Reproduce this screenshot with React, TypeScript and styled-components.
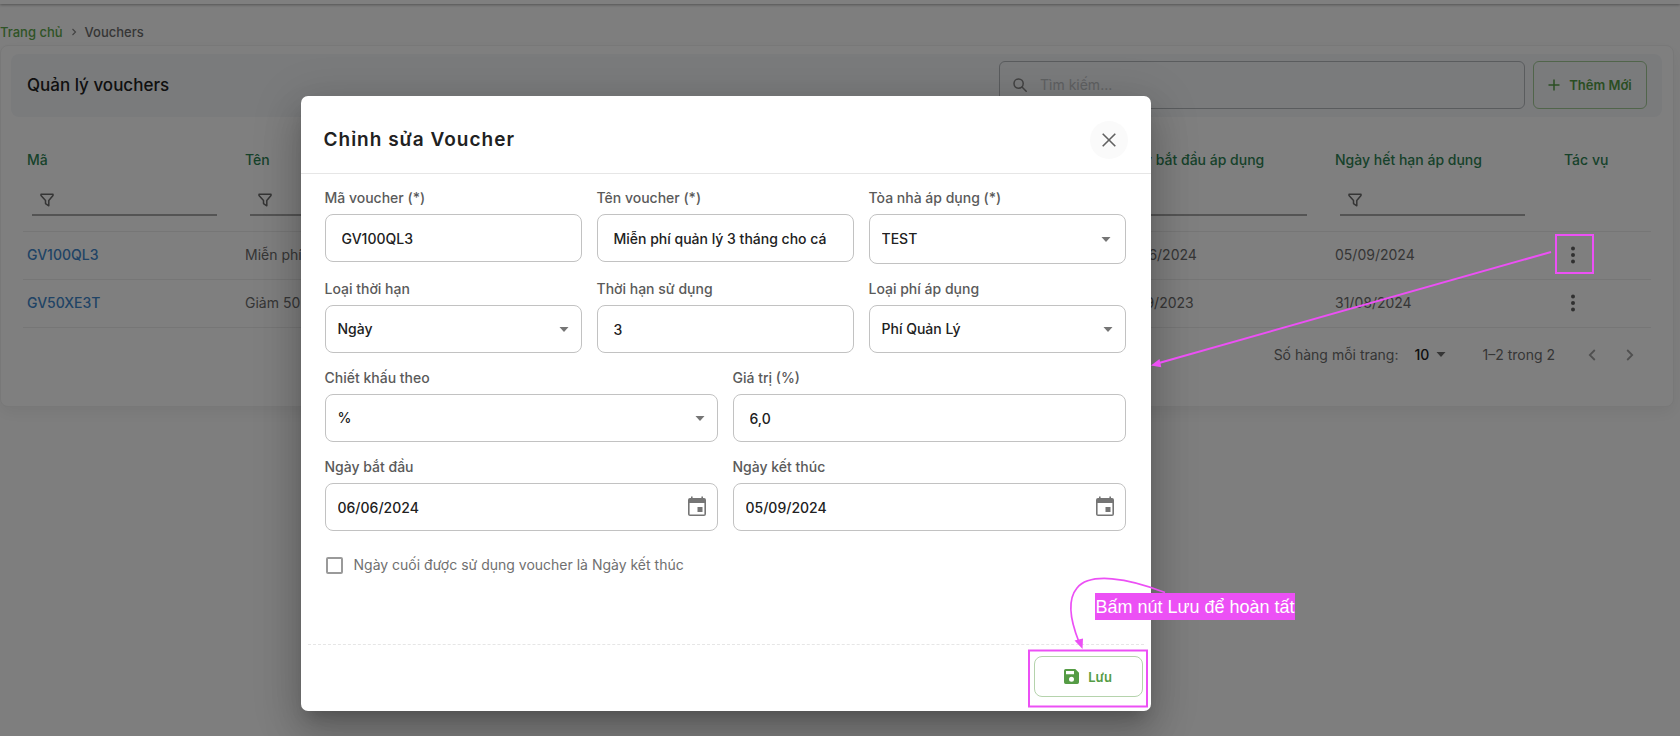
import React from "react";
import styled, { createGlobalStyle } from "styled-components";

const GlobalStyle = createGlobalStyle`
  *, *::before, *::after { box-sizing: border-box; }
  body {
    margin: 0;
    background: #fdfdfd;
    color: #212121;
    font-family: Inter, "Noto Sans", sans-serif;
    font-size: 14px;
    line-height: 20px;
  }
  button, input, select { font: inherit; color: inherit; }
`;

const Page = styled.div`
  position: relative;
  min-height: 100vh;
  overflow: hidden;
`;

const AppBar = styled.header`
  height: 4px;
  background: #fff;
  box-shadow: 0 1px 3px rgba(0, 0, 0, 0.35);
`;

const Breadcrumb = styled.nav`
  display: flex;
  align-items: center;
  gap: 7px;
  padding: 18px 0 3px;
  color: #6c6c6c;
  font-weight: 500;
  font-size: 13px;

  svg { color: #868686; }
`;

const HomeLink = styled.a`
  color: #5fa84c;
  text-decoration: none;
`;

const Card = styled.section`
  margin-right: 6px;
  padding: 8px 11px 24px 10px;
  border: 1px solid #f0f0f0;
  border-radius: 8px;
  background: #fff;
  box-shadow: 0 6px 16px rgba(0, 0, 0, 0.06);
`;

const Toolbar = styled.div`
  display: flex;
  align-items: center;
  gap: 8px;
  padding: 7px 15px 8px 16px;
  border-radius: 8px;
  background: #f4f6f9;
`;

const PageTitle = styled.h1`
  flex: 1;
  margin: 0;
  font-size: 17px;
  font-weight: 500;
  line-height: 24px;
`;

const SearchBox = styled.label`
  display: flex;
  align-items: center;
  gap: 11px;
  flex: 0 1 526px;
  height: 48px;
  padding: 0 13px;
  border: 1px solid #b4b8bc;
  border-radius: 6px;
  color: #848484;

  input {
    flex: 1;
    min-width: 0;
    border: 0;
    outline: 0;
    background: transparent;
  }
  input::placeholder { color: #bfc2c5; opacity: 1; }
`;

const AddButton = styled.button`
  display: flex;
  align-items: center;
  justify-content: center;
  gap: 9px;
  width: 114px;
  height: 48px;
  padding: 0;
  border: 1px solid #a3cb97;
  border-radius: 6px;
  background: transparent;
  color: #559c45;
  font-size: 13px;
  font-weight: 600;
`;

const VoucherTable = styled.table`
  width: calc(100% - 23px);
  margin: 16px 11px 0 12px;
  border-collapse: collapse;
  table-layout: fixed;

  th, td {
    padding: 0 0 0 4px;
    border-bottom: 1px solid #ececec;
    text-align: left;
    white-space: nowrap;
  }
  th {
    height: 98px;
    padding-top: 17px;
    color: #2f8455;
    font-weight: 500;
    vertical-align: top;
  }
  td { height: 48px; color: #6c6c6c; }
  th:last-child { padding-left: 15px; }
  td:last-child { padding-left: 8px; }
`;

const ColumnFilter = styled.label`
  display: flex;
  align-items: center;
  gap: 8px;
  width: 185px;
  height: 30px;
  margin: 16px 0 0 5px;
  padding-left: 8px;
  border-bottom: 2px solid #a9a9a9;
  color: #6a6a6a;

  input {
    flex: 1;
    min-width: 0;
    border: 0;
    outline: 0;
    background: transparent;
  }
`;

const CodeLink = styled.a`
  color: #4187cb;
  font-weight: 500;
  text-decoration: none;
`;

const RowMenu = styled.button`
  display: flex;
  align-items: center;
  justify-content: center;
  width: 32px;
  height: 32px;
  padding: 0;
  border: 0;
  background: transparent;
  color: #606060;
`;

const Pagination = styled.div`
  display: flex;
  align-items: center;
  justify-content: flex-end;
  height: 54px;
  padding-right: 13px;
  color: #6c6c6c;
`;

const PageSize = styled.label`
  display: flex;
  align-items: center;
  gap: 16px;
  margin-right: 36px;
`;

const SelectWrap = styled.span`
  position: relative;
  display: inline-flex;
  align-items: center;

  svg {
    position: absolute;
    right: 0;
    pointer-events: none;
  }
`;

const PageSizeSelect = styled.select`
  appearance: none;
  width: 32px;
  padding: 0;
  border: 0;
  background: transparent;
  color: #212121;
  font-weight: 500;
`;

const Pager = styled.button`
  display: flex;
  align-items: center;
  justify-content: center;
  width: 38px;
  height: 38px;
  padding: 0;
  border: 0;
  background: transparent;
  color: #a0a0a0;
`;

const PagerGroup = styled.div`
  display: flex;
  margin-left: 18px;
`;

const Backdrop = styled.div`
  position: absolute;
  inset: 0;
  display: flex;
  align-items: flex-start;
  justify-content: center;
  padding: 96px 229px 0 0;
  background: rgba(0, 0, 0, 0.5);
`;

const Dialog = styled.form`
  width: 850px;
  border-radius: 7px;
  background: #fff;
  box-shadow: 0 11px 15px -7px rgba(0, 0, 0, 0.2),
    0 24px 38px 3px rgba(0, 0, 0, 0.14), 0 9px 46px 8px rgba(0, 0, 0, 0.12);
`;

const DialogHeader = styled.header`
  display: flex;
  align-items: center;
  justify-content: space-between;
  height: 78px;
  padding: 11px 23px 0;
  border-bottom: 1px solid #e6e6e6;
`;

const DialogTitle = styled.h2`
  margin: 0;
  font-size: 19px;
  font-weight: 600;
  line-height: 24px;
  letter-spacing: 1px;
`;

const CloseButton = styled.button`
  display: flex;
  align-items: center;
  justify-content: center;
  width: 38px;
  height: 38px;
  padding: 0;
  border: 0;
  border-radius: 50%;
  background: #fafafa;
  color: #616161;
`;

const DialogBody = styled.div`
  display: flex;
  flex-direction: column;
  gap: 15px;
  padding: 14px 25px 69px 24px;
`;

const FieldRow = styled.div`
  display: flex;
  align-items: flex-start;
  gap: 15px;
`;

const Field = styled.div`
  display: flex;
  flex-direction: column;
  flex: 1 1 0;
  gap: 6px;
  min-width: 0;
`;

const FieldLabel = styled.label`
  color: #5a5a5a;
  font-weight: 500;
`;

const Control = styled.div<{ $tall?: boolean; $text?: boolean }>`
  position: relative;
  display: flex;
  align-items: center;
  height: ${(p) => (p.$tall ? 50 : 48)}px;
  border: 1px solid #c2c2c2;
  border-radius: 8px;
  color: #757575;

  input, select {
    appearance: none;
    width: 100%;
    height: 100%;
    padding: 0 ${(p) => (p.$text ? 16 : 12)}px;
    border: 0;
    outline: 0;
    background: transparent;
    color: #212121;
    font-weight: 500;
  }
  > svg {
    position: absolute;
    right: ${(p) => (p.$tall ? 14 : 12)}px;
    pointer-events: none;
  }
`;

const CalendarButton = styled.button`
  display: flex;
  flex: none;
  margin-right: 8px;
  padding: 0;
  border: 0;
  background: transparent;
  color: #757575;
`;

const CheckRow = styled.label`
  display: flex;
  align-items: center;
  gap: 11px;
  margin-top: 9px;
  padding-left: 1px;
  color: #707070;

  input {
    appearance: none;
    width: 17px;
    height: 17px;
    margin: 0;
    border: 2px solid #9a9a9a;
    border-radius: 2px;
  }
`;

const DialogFooter = styled.footer`
  display: flex;
  justify-content: flex-end;
  margin: 0 7px;
  padding: 11px 1px 14px;
  border-top: 1px dashed #e6e6e6;
`;

const SaveButton = styled.button`
  display: flex;
  align-items: center;
  justify-content: center;
  gap: 9px;
  width: 109px;
  height: 41px;
  padding: 0;
  border: 1px solid #b5d3ac;
  border-radius: 8px;
  background: #fff;
  color: #559c45;
  font-weight: 600;
  font-size: 13px;
`;

const MarkupLayer = styled.svg`
  position: absolute;
  top: 0;
  left: 0;
  pointer-events: none;
`;

const Callout = styled.div`
  position: absolute;
  top: 593px;
  left: 1095px;
  width: 200px;
  padding-top: 1px;
  color: #fff;
  background: #ec50f5;
  font-family: "Liberation Sans", Arial, sans-serif;
  font-size: 18px;
  line-height: 26px;
  text-align: center;
  white-space: nowrap;
`;

const FilterIcon = () => (
  <svg width="14" height="14" viewBox="0 0 14 14" fill="none" stroke="currentColor" strokeWidth="1.5" strokeLinejoin="round">
    <path d="M1 1.200h12v1.300L8.800 7.400V12.800L5.500 10.600V7.400L1 2.500z" />
  </svg>
);

const SearchIcon = () => (
  <svg width="14" height="14" viewBox="0 0 14 14" fill="none" stroke="currentColor" strokeWidth="1.5">
    <circle cx="5.6" cy="5.6" r="4.6" />
    <path d="M9 9l4.2 4.2" strokeLinecap="round" />
  </svg>
);

const PlusIcon = () => (
  <svg width="12" height="12" viewBox="0 0 12 12" stroke="currentColor" strokeWidth="1.5">
    <path d="M6 .5v11M.5 6h11" />
  </svg>
);

const DotsIcon = () => (
  <svg width="6" height="18" viewBox="0 0 6 18" fill="currentColor">
    <circle cx="3" cy="2.5" r="2" />
    <circle cx="3" cy="9" r="2" />
    <circle cx="3" cy="15.5" r="2" />
  </svg>
);

const CaretIcon = () => (
  <svg width="10" height="5" viewBox="0 0 10 5" fill="currentColor">
    <path d="M0.5 0h9L5 5z" />
  </svg>
);

const ChevronIcon = ({ left }: { left?: boolean }) => (
  <svg width="8" height="12" viewBox="0 0 8 12" fill="none" stroke="currentColor" strokeWidth="1.8">
    <path d={left ? "M6.8 1L1.8 6l5 5" : "M1.2 1l5 5-5 5"} />
  </svg>
);

const CrossIcon = () => (
  <svg width="14" height="14" viewBox="0 0 14 14" stroke="currentColor" strokeWidth="1.6">
    <path d="M.7.7l12.6 12.6M13.3.7L.7 13.3" />
  </svg>
);

const CalendarIcon = () => (
  <svg width="24" height="24" viewBox="0 0 24 24" fill="currentColor">
    <path d="M19 3h-1V1.500h-1.600V3H7.600V1.500H6V3H5a2 2 0 0 0-2 2v14c0 1.100.900 2 2 2h14a2 2 0 0 0 2-2V5a2 2 0 0 0-2-2zm.4 16.400H4.600V8h14.800zM17.500 12h-5v5h5z" />
  </svg>
);

const SaveIcon = () => (
  <svg width="15" height="15" viewBox="0 0 15 15" fill="currentColor" fillRule="evenodd">
    <path d="M1.700 0h9.600L15 3.700v9.600a1.700 1.700 0 0 1-1.700 1.700H1.700A1.700 1.700 0 0 1 0 13.300V1.700A1.700 1.700 0 0 1 1.700 0zM2 2v3.200h8V2zM7.500 7.800a2.500 2.500 0 1 0 0 5 2.500 2.500 0 0 0 0-5z" />
  </svg>
);

const columns = [
  { key: "code", title: "Mã" },
  { key: "name", title: "Tên" },
  { key: "c3", title: "" },
  { key: "c4", title: "" },
  { key: "c5", title: "" },
  { key: "start", title: "Ngày bắt đầu áp dụng" },
  { key: "end", title: "Ngày hết hạn áp dụng" },
];

const vouchers = [
  { code: "GV100QL3", name: "Miễn phí", start: "06/06/2024", end: "05/09/2024" },
  { code: "GV50XE3T", name: "Giảm 50%", start: "01/09/2023", end: "31/08/2024" },
];

type FieldProps = { id: string; label: string; value: string };

const TextField = ({ id, label, value }: FieldProps) => (
  <Field>
    <FieldLabel htmlFor={id}>{label}</FieldLabel>
    <Control $text>
      <input id={id} type="text" defaultValue={value} />
    </Control>
  </Field>
);

const SelectField = ({ id, label, value, tall }: FieldProps & { tall?: boolean }) => (
  <Field>
    <FieldLabel htmlFor={id}>{label}</FieldLabel>
    <Control $tall={tall}>
      <select id={id} defaultValue={value}>
        <option>{value}</option>
      </select>
      <CaretIcon />
    </Control>
  </Field>
);

const DateField = ({ id, label, value }: FieldProps) => (
  <Field>
    <FieldLabel htmlFor={id}>{label}</FieldLabel>
    <Control>
      <input id={id} type="text" defaultValue={value} />
      <CalendarButton type="button" aria-label={label}>
        <CalendarIcon />
      </CalendarButton>
    </Control>
  </Field>
);

export default function App() {
  return (
    <Page>
      <GlobalStyle />
      <AppBar />
      <Breadcrumb>
        <HomeLink href="#">Trang chủ</HomeLink>
        <svg width="8" height="8" viewBox="0 0 8 8" fill="none" stroke="currentColor" strokeWidth="1.2">
          <path d="M2.500 1l3 3-3 3" />
        </svg>
        <span>Vouchers</span>
      </Breadcrumb>

      <Card>
        <Toolbar>
          <PageTitle>Quản lý vouchers</PageTitle>
          <SearchBox>
            <SearchIcon />
            <input type="text" placeholder="Tìm kiếm..." aria-label="Tìm kiếm" />
          </SearchBox>
          <AddButton type="button">
            <PlusIcon />
            Thêm Mới
          </AddButton>
        </Toolbar>

        <VoucherTable>
          <colgroup>
            {columns.map((c) => (
              <col key={c.key} />
            ))}
            <col width="102" />
          </colgroup>
          <thead>
            <tr>
              {columns.map((c) => (
                <th key={c.key} scope="col">
                  {c.title || "\u00a0"}
                  <ColumnFilter>
                    <FilterIcon />
                    <input type="text" aria-label={c.title || c.key} />
                  </ColumnFilter>
                </th>
              ))}
              <th scope="col">Tác vụ</th>
            </tr>
          </thead>
          <tbody>
            {vouchers.map((v) => (
              <tr key={v.code}>
                <td>
                  <CodeLink href="#">{v.code}</CodeLink>
                </td>
                <td>{v.name}</td>
                <td />
                <td />
                <td />
                <td>{v.start}</td>
                <td>{v.end}</td>
                <td>
                  <RowMenu type="button" aria-label="Tác vụ">
                    <DotsIcon />
                  </RowMenu>
                </td>
              </tr>
            ))}
          </tbody>
        </VoucherTable>

        <Pagination>
          <PageSize>
            Số hàng mỗi trang:
            <SelectWrap>
              <PageSizeSelect defaultValue="10">
                <option>10</option>
              </PageSizeSelect>
              <CaretIcon />
            </SelectWrap>
          </PageSize>
          <span>1–2 trong 2</span>
          <PagerGroup>
            <Pager type="button" aria-label="Trang trước">
              <ChevronIcon left />
            </Pager>
            <Pager type="button" aria-label="Trang sau">
              <ChevronIcon />
            </Pager>
          </PagerGroup>
        </Pagination>
      </Card>

      <Backdrop>
        <Dialog role="dialog" aria-labelledby="dialog-title">
          <DialogHeader>
            <DialogTitle id="dialog-title">Chỉnh sửa Voucher</DialogTitle>
            <CloseButton type="button" aria-label="Đóng">
              <CrossIcon />
            </CloseButton>
          </DialogHeader>
          <DialogBody>
            <FieldRow>
              <TextField id="code" label="Mã voucher (*)" value="GV100QL3" />
              <TextField id="name" label="Tên voucher (*)" value="Miễn phí quản lý 3 tháng cho cá" />
              <SelectField id="building" label="Tòa nhà áp dụng (*)" value="TEST" tall />
            </FieldRow>
            <FieldRow>
              <SelectField id="unit" label="Loại thời hạn" value="Ngày" />
              <TextField id="duration" label="Thời hạn sử dụng" value="3" />
              <SelectField id="fee" label="Loại phí áp dụng" value="Phí Quản Lý" />
            </FieldRow>
            <FieldRow>
              <SelectField id="discount" label="Chiết khấu theo" value="%" />
              <TextField id="amount" label="Giá trị (%)" value="6,0" />
            </FieldRow>
            <FieldRow>
              <DateField id="start" label="Ngày bắt đầu" value="06/06/2024" />
              <DateField id="end" label="Ngày kết thúc" value="05/09/2024" />
            </FieldRow>
            <CheckRow>
              <input type="checkbox" />
              Ngày cuối được sử dụng voucher là Ngày kết thúc
            </CheckRow>
          </DialogBody>
          <DialogFooter>
            <SaveButton type="button">
              <SaveIcon />
              Lưu
            </SaveButton>
          </DialogFooter>
        </Dialog>
      </Backdrop>

      <MarkupLayer width="1680" height="736" viewBox="0 0 1680 736" fill="none" stroke="#ec50f5" strokeWidth="2">
        <rect x="1556" y="235" width="37" height="38" />
        <path d="M1551 252L1159 363" />
        <path d="M1151 365.500l8.500-6.500 1.800 8.200z" fill="#ec50f5" stroke="none" />
        <rect x="1029" y="650.500" width="118" height="56" />
        <path d="M1165 592.500C1128 578 1090 572 1077 588C1067 600 1071 622 1079 642" strokeWidth="1.700" />
        <path d="M1082.500 649l-8-8.500 8.500-2z" fill="#ec50f5" stroke="none" />
      </MarkupLayer>
      <Callout>Bấm nút Lưu để hoàn tất</Callout>
    </Page>
  );
}
